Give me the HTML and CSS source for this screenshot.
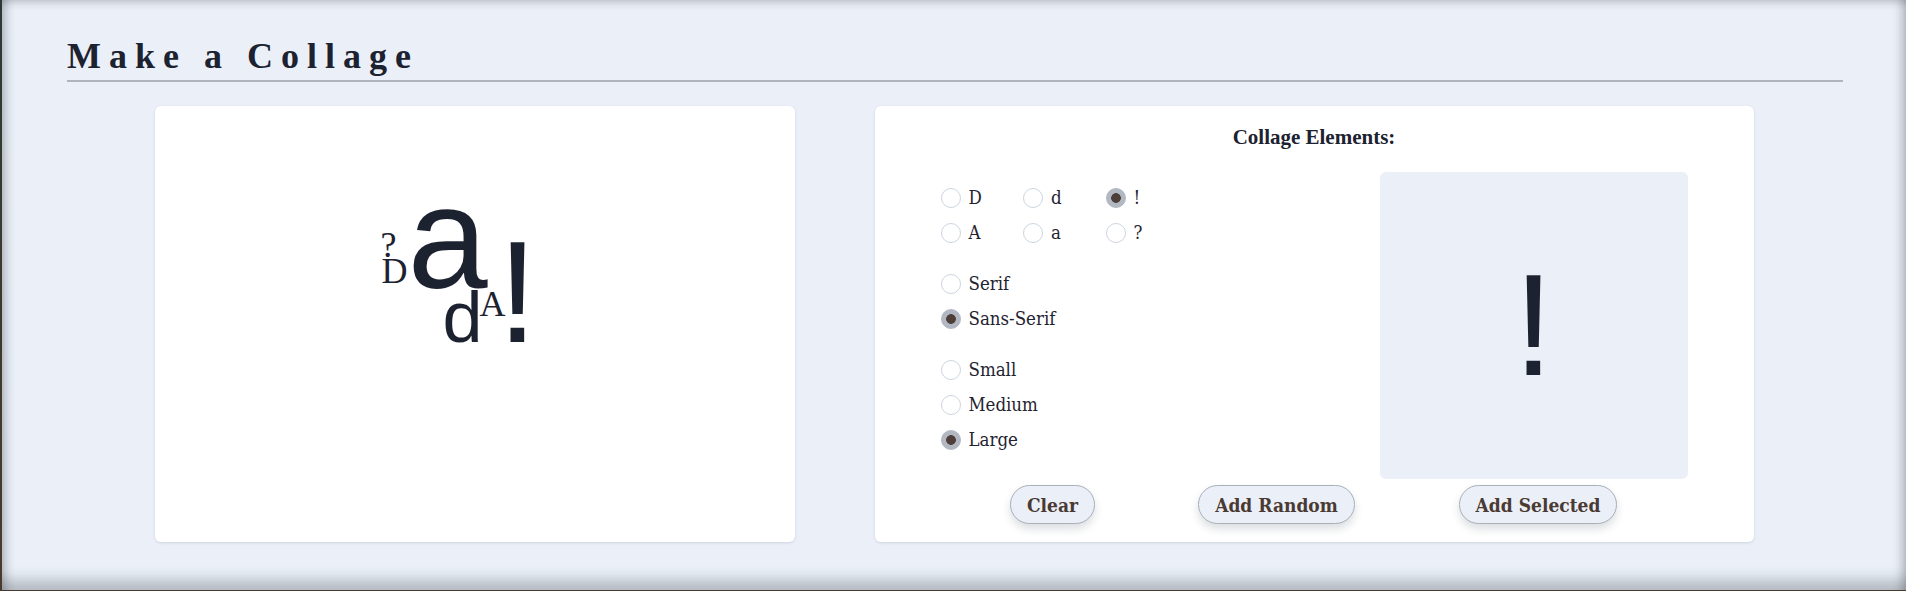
FILE: index.html
```html
<!DOCTYPE html>
<html lang="en">
<head>
<meta charset="utf-8">
<title>Make a Collage</title>
<link rel="stylesheet" href="styles.css">
</head>
<body>
<div class="window">
  <header class="page-head">
    <h1 class="page-title">Make a Collage</h1>
  </header>
  <main class="cards">
    <section class="card canvas">
      <span class="ch serif s c1">?</span>
      <span class="ch serif s c2">D</span>
      <span class="ch sans l c3">a</span>
      <span class="ch sans m c4">d</span>
      <span class="ch serif s c5">A</span>
      <span class="ch sans l c6">!</span>
    </section>
    <section class="card controls">
      <h2 class="controls-title">Collage Elements:</h2>
      <div class="controls-body">
        <form class="options">
          <div class="letter-grid">
            <label class="opt"><input type="radio" name="ch"><span>D</span></label>
            <label class="opt"><input type="radio" name="ch"><span>d</span></label>
            <label class="opt"><input type="radio" name="ch" checked><span>!</span></label>
            <label class="opt"><input type="radio" name="ch"><span>A</span></label>
            <label class="opt"><input type="radio" name="ch"><span>a</span></label>
            <label class="opt"><input type="radio" name="ch"><span>?</span></label>
          </div>
          <div class="group">
            <label class="opt"><input type="radio" name="font"><span>Serif</span></label>
            <label class="opt"><input type="radio" name="font" checked><span>Sans-Serif</span></label>
          </div>
          <div class="group">
            <label class="opt"><input type="radio" name="size"><span>Small</span></label>
            <label class="opt"><input type="radio" name="size"><span>Medium</span></label>
            <label class="opt"><input type="radio" name="size" checked><span>Large</span></label>
          </div>
        </form>
        <div class="preview"><span class="preview-char">!</span></div>
      </div>
      <div class="actions">
        <div class="actions-left">
          <button class="btn" type="button">Clear</button>
          <button class="btn" type="button">Add Random</button>
        </div>
        <div class="actions-right">
          <button class="btn" type="button">Add Selected</button>
        </div>
      </div>
    </section>
  </main>
</div>
</body>
</html>
```

FILE: styles.css
```css
html, body {
  margin: 0;
  padding: 0;
}
body {
  background: #3a302b;
  height: 591px;
  overflow: hidden;
  background-image: linear-gradient(180deg, #2c3a34 0, #3d3a2c 60%, #4a3a2e 100%);
}
.window {
  margin-left: 2px;
  height: 590px;
  background: #ebf0f8;
  box-sizing: border-box;
  padding: 34px 63px 0 65px;
  box-shadow:
    inset 0 9px 8px -7px rgba(40, 45, 55, 0.28),
    inset 13px 0 10px -9px rgba(40, 45, 55, 0.3),
    inset -13px 0 10px -9px rgba(40, 45, 55, 0.3),
    inset 0 -22px 14px -12px rgba(40, 45, 55, 0.28);
  color: #1c2230;
}
.page-title {
  margin: 0;
  font-family: "Liberation Serif", serif;
  font-weight: 700;
  font-size: 36px;
  line-height: 44px;
  letter-spacing: 8px;
  padding-bottom: 2px;
  border-bottom: 2px solid #aeb5bf;
  color: #1c2230;
}
.cards {
  display: flex;
  justify-content: center;
  gap: 80px;
  margin-top: 24px;
  margin-left: -65px;
  margin-right: -63px;
}
.card {
  background: #fff;
  border-radius: 6px;
  box-shadow: 0 1px 3px rgba(30, 40, 60, 0.14);
  height: 436px;
  box-sizing: border-box;
}
.canvas {
  position: relative;
  width: 640px;
}
.ch {
  position: absolute;
  line-height: 1;
  color: #1c2230;
}
.serif { font-family: "Liberation Serif", serif; }
.sans { font-family: "Liberation Sans", sans-serif; }
.s { font-size: 36px; }
.m { font-size: 72px; }
.l { font-size: 144px; }
.c1 { left: 226px; top: 121px; }
.c2 { left: 227px; top: 147px; }
.c3 { left: 253px; top: 61px; }
.c4 { left: 288px; top: 175px; }
.c5 { left: 325px; top: 180px; }
.c6 { left: 343px; top: 115px; }

.controls {
  width: 879px;
  padding: 18px 66px 18px;
  display: flex;
  flex-direction: column;
}
.controls-title {
  margin: 0 0 22px;
  text-align: center;
  font-family: "Liberation Serif", serif;
  font-weight: 700;
  font-size: 21px;
  line-height: 26px;
  color: #1c2230;
}
.controls-body {
  display: flex;
}
.options {
  flex: 1;
  margin: 0;
  padding-top: 8px;
  font-family: "DejaVu Serif Condensed", "DejaVu Serif", serif;
  font-size: 18.5px;
  color: #1f2430;
}
.letter-grid {
  display: grid;
  grid-template-columns: repeat(3, 82.5px);
}
.group {
  margin-top: 16px;
}
.opt {
  display: flex;
  align-items: center;
  gap: 8px;
  height: 35px;
}
.opt input {
  appearance: none;
  -webkit-appearance: none;
  margin: 0;
  width: 20px;
  height: 20px;
  border-radius: 50%;
  border: 1px solid #cdd5e0;
  background: #fff;
  box-sizing: border-box;
  flex: 0 0 auto;
}
.opt input:checked {
  border-color: #b1b8c2;
  background: radial-gradient(circle, #4d3e38 0 4.5px, #b1b8c2 5.2px);
}
.preview {
  width: 308px;
  height: 307px;
  background: #ebf0f8;
  border-radius: 6px;
  display: flex;
  align-items: center;
  justify-content: center;
}
.preview-char {
  font-family: "Liberation Sans", sans-serif;
  font-size: 144px;
  line-height: 1;
  color: #1c2230;
}
.actions {
  display: flex;
  margin-top: 6px;
}
.actions-left {
  flex: 0 0 448px;
  display: grid;
  grid-template-columns: 1fr 1fr;
  justify-items: center;
}
.actions-right {
  flex: 1;
  display: flex;
  justify-content: center;
}
.btn {
  height: 39px;
  padding: 0 16px;
  border: 1px solid #a9b0ba;
  border-radius: 20px;
  background: #ebf0f8;
  box-shadow: 0 5px 8px rgba(40, 50, 70, 0.16);
  font-family: "DejaVu Serif Condensed", "DejaVu Serif", serif;
  font-weight: 700;
  font-size: 19px;
  color: #4a3a33;
  cursor: pointer;
}
```
